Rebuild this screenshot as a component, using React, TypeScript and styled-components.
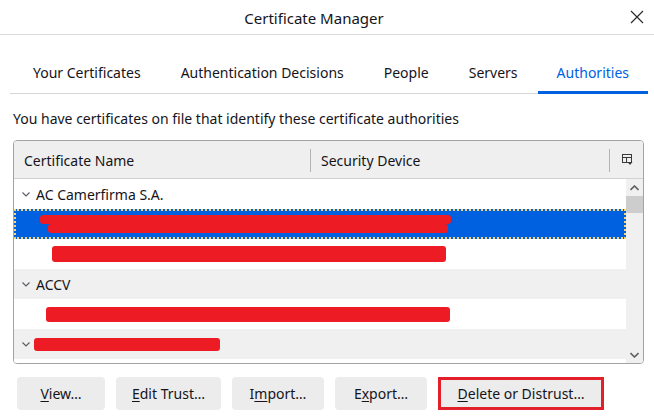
import React from "react";
import styled, { createGlobalStyle } from "styled-components";

const Global = createGlobalStyle`
  html, body { margin: 0; padding: 0; background: #ffffff; }
  body { width: 654px; height: 416px; overflow: hidden; font-family: "Noto Sans", "Open Sans", sans-serif; color: #15141a; }
  * { box-sizing: border-box; }
`;

const Dialog = styled.div`
  width: 654px;
  height: 416px;
  display: flex;
  flex-direction: column;
  background: #fff;
`;

const TitleBar = styled.div`
  height: 35px;
  display: flex;
  align-items: center;
  border-bottom: 1px solid #dcdcdc;
`;

const Title = styled.div`
  flex: 1;
  text-align: center;
  font-size: 15px;
  padding-top: 1px;
  padding-left: 4px;
`;

const CloseButton = styled.button`
  width: 26px;
  height: 26px;
  margin-right: 4px;
  border: none;
  background: transparent;
  padding: 0;
  display: flex;
  align-items: center;
  justify-content: center;
`;

const TabList = styled.div`
  display: flex;
  margin: 18px 6px 0 10px;
  padding-left: 3px;
  border-bottom: 1px solid #d6d6d6;
`;

const Tab = styled.div<{ $active?: boolean }>`
  height: 41px;
  padding: 0 20px;
  display: flex;
  align-items: center;
  font-size: 14px;
  margin-bottom: -1px;
  color: ${(p) => (p.$active ? "#0061e0" : "#15141a")};
  border-bottom: 3px solid ${(p) => (p.$active ? "#0061e0" : "transparent")};
  &:last-child { flex: 1; justify-content: center; padding: 0; }
`;

const Description = styled.div`
  margin: 15px 0 0 13px;
  font-size: 14px;
  height: 20px;
  line-height: 20px;
`;

const Tree = styled.div`
  margin: 11px 0 0 13px;
  width: 631px;
  height: 224px;
  border: 1px solid #a3a3a3;
  border-radius: 4px;
  display: flex;
  flex-direction: column;
  overflow: hidden;
`;

const Header = styled.div`
  height: 38px;
  flex: none;
  display: flex;
  align-items: center;
  background: #efefef;
  border-bottom: 1px solid #d2d2d2;
`;

const HeaderCell = styled.div<{ $width: number }>`
  width: ${(p) => p.$width}px;
  height: 100%;
  display: flex;
  align-items: center;
  padding: 2px 0 0 10px;
  font-size: 14px;
  position: relative;
  &::after {
    content: "";
    position: absolute;
    right: 0;
    top: 8px;
    bottom: 6px;
    width: 1px;
    background: #b4b4b4;
  }
`;

const ColumnPicker = styled.div`
  flex: 1;
  display: flex;
  align-items: center;
  justify-content: center;
  padding-left: 1px;
`;

const Body = styled.div`
  flex: 1;
  display: flex;
  min-height: 0;
`;

const Rows = styled.div`
  flex: 1;
  overflow: hidden;
  display: flex;
  flex-direction: column;
`;

const Row = styled.div<{ $shade?: boolean; $selected?: boolean }>`
  height: 30px;
  flex: none;
  display: flex;
  align-items: center;
  font-size: 14px;
  background: ${(p) => (p.$selected ? "#0061e0" : p.$shade ? "#f0f0f0" : "#ffffff")};
  border: ${(p) => (p.$selected ? "2px dotted #f2d57c" : "none")};
  padding-left: ${(p) => (p.$selected ? "6px" : "8px")};
`;

const Twisty = styled.span`
  width: 8px;
  height: 30px;
  display: flex;
  align-items: center;
  margin-right: 6px;
  flex: none;
`;

const Label = styled.span`
  white-space: nowrap;
  padding-top: 1px;
`;

const RedactGroup = styled.div<{ $indent: number }>`
  display: flex;
  flex-direction: column;
  margin-left: ${(p) => p.$indent}px;
`;

const Redact = styled.div<{ $width: number; $height: number; $shift?: number }>`
  width: ${(p) => p.$width}px;
  height: ${(p) => p.$height}px;
  flex: none;
  margin-left: ${(p) => p.$shift ?? 0}px;
  background: #ed1c24;
  border-radius: 3px;
`;

const Scrollbar = styled.div`
  width: 17px;
  flex: none;
  background: #f0f0f0;
  display: flex;
  flex-direction: column;
`;

const ScrollArrow = styled.div`
  height: 17px;
  display: flex;
  align-items: center;
  justify-content: center;
`;

const Thumb = styled.div`
  height: 17px;
  background: #cdcdcd;
`;

const Track = styled.div`
  flex: 1;
`;

const ButtonRow = styled.div`
  display: flex;
  gap: 11px;
  margin: 13px 0 0 17px;
`;

const Button = styled.button<{ $width: number; $marked?: boolean }>`
  width: ${(p) => p.$width}px;
  height: 33px;
  border: none;
  background: #ececec;
  font-family: "Noto Sans", "Open Sans", sans-serif;
  font-size: 14px;
  color: #15141a;
  padding: 0;
  box-shadow: ${(p) => (p.$marked ? "inset 0 0 0 3px #e3202a" : "none")};
  border-radius: ${(p) => (p.$marked ? "0" : "4px")};
  u { text-decoration-thickness: 1px; text-underline-offset: 2px; }
`;

const Chevron = () => (
  <svg width="8" height="5" viewBox="0 0 8 5">
    <path d="M0.5 0.5 L4 4 L7.5 0.5" fill="none" stroke="#5b5b66" strokeWidth="1.1" />
  </svg>
);

export default function App() {
  return (
    <Dialog>
      <Global />
      <TitleBar>
        <Title>Certificate Manager</Title>
        <CloseButton aria-label="Close">
          <svg width="14" height="14" viewBox="0 0 14 14">
            <path d="M1 1 L13 13 M13 1 L1 13" stroke="#2b2b2b" strokeWidth="1.2" fill="none" />
          </svg>
        </CloseButton>
      </TitleBar>

      <TabList>
        <Tab>Your Certificates</Tab>
        <Tab>Authentication Decisions</Tab>
        <Tab>People</Tab>
        <Tab>Servers</Tab>
        <Tab $active>Authorities</Tab>
      </TabList>

      <Description>You have certificates on file that identify these certificate authorities</Description>

      <Tree>
        <Header>
          <HeaderCell $width={297}>Certificate Name</HeaderCell>
          <HeaderCell $width={299}>Security Device</HeaderCell>
          <ColumnPicker>
            <svg width="11" height="12" viewBox="0 0 11 12">
              <rect x="0.5" y="0.5" width="9" height="8" fill="none" stroke="#3a3a3a" />
              <path d="M0.5 3.5 H9.5 M4.5 3.5 V8.5" stroke="#3a3a3a" />
              <path d="M5.5 8 L10.5 8 L8 11 Z" fill="#3a3a3a" />
            </svg>
          </ColumnPicker>
        </Header>
        <Body>
          <Rows>
            <Row>
              <Twisty><Chevron /></Twisty>
              <Label>AC Camerfirma S.A.</Label>
            </Row>
            <Row $selected>
              <RedactGroup $indent={18}>
                <Redact $width={411} $height={9} />
                <Redact $width={400} $height={9} $shift={8} />
              </RedactGroup>
            </Row>
            <Row>
              <RedactGroup $indent={30}>
                <Redact $width={394} $height={16} />
              </RedactGroup>
            </Row>
            <Row $shade>
              <Twisty><Chevron /></Twisty>
              <Label>ACCV</Label>
            </Row>
            <Row>
              <RedactGroup $indent={24}>
                <Redact $width={404} $height={15} />
              </RedactGroup>
            </Row>
            <Row $shade>
              <Twisty><Chevron /></Twisty>
              <RedactGroup $indent={-2}>
                <Redact $width={186} $height={13} />
              </RedactGroup>
            </Row>
            <Row />
          </Rows>
          <Scrollbar>
            <ScrollArrow>
              <svg width="9" height="6" viewBox="0 0 9 6">
                <path d="M0.5 5 L4.5 1 L8.5 5" fill="none" stroke="#606060" strokeWidth="1.6" />
              </svg>
            </ScrollArrow>
            <Thumb />
            <Track />
            <ScrollArrow>
              <svg width="9" height="6" viewBox="0 0 9 6">
                <path d="M0.5 1 L4.5 5 L8.5 1" fill="none" stroke="#606060" strokeWidth="1.6" />
              </svg>
            </ScrollArrow>
          </Scrollbar>
        </Body>
      </Tree>

      <ButtonRow>
        <Button $width={88}><u>V</u>iew…</Button>
        <Button $width={105}><u>E</u>dit Trust…</Button>
        <Button $width={92}>I<u>m</u>port…</Button>
        <Button $width={92}>E<u>x</u>port…</Button>
        <Button $width={166} $marked><u>D</u>elete or Distrust…</Button>
      </ButtonRow>
    </Dialog>
  );
}
